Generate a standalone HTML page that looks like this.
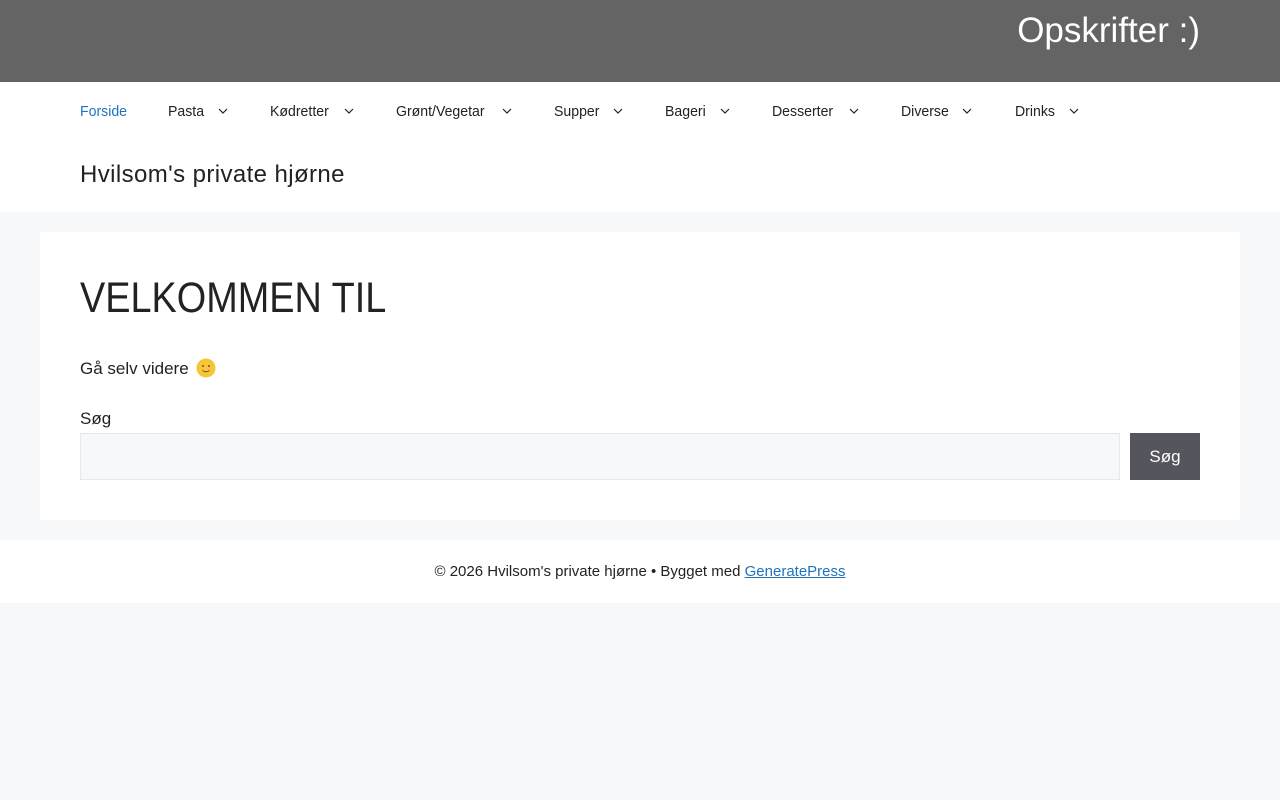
<!DOCTYPE html>
<html><head><meta charset="utf-8"><style>
*{margin:0;padding:0;box-sizing:border-box}
body{width:1280px;height:800px;background:#f7f8f9;font-family:"Liberation Sans",sans-serif;color:#222;position:relative;overflow:hidden}
.top{position:absolute;left:0;top:0;width:1280px;height:82px;background:#646464}
.top span{position:absolute;right:80px;top:11px;color:#fff;font-size:35px;white-space:nowrap}
.hdr{position:absolute;top:82px;left:0;width:1280px;height:130px;background:#fff}
.nav a{position:absolute;top:21px;font-size:15px;color:#222;text-decoration:none;transform:scaleX(.94);transform-origin:left;white-space:nowrap}
.nav svg{position:absolute;top:26px}
.title{position:absolute;left:80px;top:79px;font-size:24px;letter-spacing:0.4px}
.box{position:absolute;left:40px;top:232px;width:1200px;height:288px;background:#fff}
h1{position:absolute;left:40px;top:42px;font-weight:normal;font-size:43px;transform:scaleX(.88);transform-origin:left}
.p{position:absolute;left:40px;top:126px;font-size:17px}
.lbl{position:absolute;left:40px;top:177px;font-size:17px}
.inp{position:absolute;left:40px;top:201px;width:1040px;height:47px;background:#f7f8f9;border:1px solid #e8e8e8}
.btn{position:absolute;left:1090px;top:201px;width:70px;height:47px;background:#55555e;color:#fff;font-size:17px;text-align:center;line-height:47px}
.ft{position:absolute;left:0;top:540px;width:1280px;height:63px;background:#fff;text-align:center;font-size:15px;line-height:63px}
.ft a{color:#1e73be;text-decoration:underline}
</style></head><body>
<div class="top"><span>Opskrifter :)</span></div>
<div class="hdr"><div class="nav">
<a style="left:80px;color:#1e73be">Forside</a>
<a style="left:168px">Pasta</a>
<a style="left:270px">Kødretter</a>
<a style="left:396px">Grønt/Vegetar</a>
<a style="left:554px">Supper</a>
<a style="left:665px">Bageri</a>
<a style="left:772px">Desserter</a>
<a style="left:901px">Diverse</a>
<a style="left:1015px">Drinks</a>
<svg style="left:218px" width="10" height="7" viewBox="0 0 10 7"><path d="M1 1l4 4 4-4" fill="none" stroke="#222" stroke-width="1.2"/></svg>
<svg style="left:344px" width="10" height="7" viewBox="0 0 10 7"><path d="M1 1l4 4 4-4" fill="none" stroke="#222" stroke-width="1.2"/></svg>
<svg style="left:502px" width="10" height="7" viewBox="0 0 10 7"><path d="M1 1l4 4 4-4" fill="none" stroke="#222" stroke-width="1.2"/></svg>
<svg style="left:613px" width="10" height="7" viewBox="0 0 10 7"><path d="M1 1l4 4 4-4" fill="none" stroke="#222" stroke-width="1.2"/></svg>
<svg style="left:720px" width="10" height="7" viewBox="0 0 10 7"><path d="M1 1l4 4 4-4" fill="none" stroke="#222" stroke-width="1.2"/></svg>
<svg style="left:849px" width="10" height="7" viewBox="0 0 10 7"><path d="M1 1l4 4 4-4" fill="none" stroke="#222" stroke-width="1.2"/></svg>
<svg style="left:962px" width="10" height="7" viewBox="0 0 10 7"><path d="M1 1l4 4 4-4" fill="none" stroke="#222" stroke-width="1.2"/></svg>
<svg style="left:1069px" width="10" height="7" viewBox="0 0 10 7"><path d="M1 1l4 4 4-4" fill="none" stroke="#222" stroke-width="1.2"/></svg>
</div>
<div class="title">Hvilsom's private hjørne</div></div>
<div class="box">
<h1>VELKOMMEN TIL</h1>
<div class="p">Gå selv videre <svg width="20" height="20" viewBox="0 0 20 20" style="vertical-align:-4px;margin-left:3px"><circle cx="10" cy="10" r="9.5" fill="#f8c537"/><circle cx="7" cy="8" r="1" fill="#654"/><circle cx="13" cy="8" r="1" fill="#654"/><path d="M6.5 12.5q3.5 2.5 7 0" fill="none" stroke="#654" stroke-width="1"/></svg></div>
<div class="lbl">Søg</div>
<div class="inp"></div>
<div class="btn">Søg</div>
</div>
<div class="ft">© 2026 Hvilsom's private hjørne • Bygget med <a>GeneratePress</a></div>
</body></html>
